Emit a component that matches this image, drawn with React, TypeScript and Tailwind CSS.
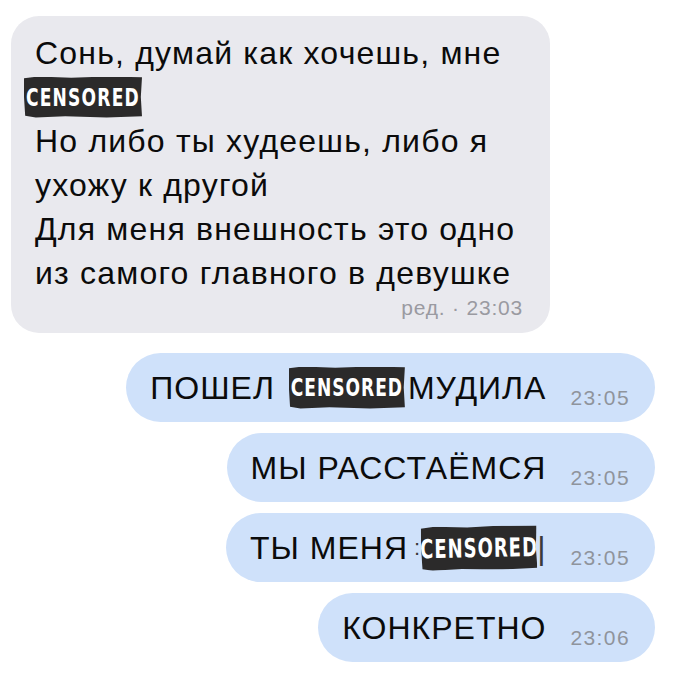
import React from 'react';

// ===== Chat screenshot: one incoming (grey) and four outgoing (blue) bubbles =====

type Outgoing = {
  id: number;
  time: string;
  parts: React.ReactNode;
};

const FONT = "font-['Liberation_Sans','Helvetica','Arial',sans-serif]";

const Censored: React.FC<{ className?: string; text?: string }> = ({ className, text }) => (
  <span
    className={[
      'inline-flex shrink-0 items-center justify-center bg-[#2b2a2a] text-white',
      "font-['DejaVu_Sans_Condensed','Liberation_Sans_Narrow',sans-serif] font-bold",
      '[clip-path:polygon(0_4%,12%_0,40%_3%,70%_0,100%_2%,99%_50%,100%_97%,70%_100%,35%_97%,10%_100%,1%_96%,0_50%)]',
      className ?? '',
    ].join(' ')}
  >
    <span className={['inline-block scale-y-[1.3] leading-none', text ?? 'text-[19px]'].join(' ')}>
      CENSORED
    </span>
  </span>
);

const messages: Outgoing[] = [
  {
    id: 1,
    time: '23:05',
    parts: (
      <>
        ПОШЕЛ
        <Censored className="ml-[14px] mr-[3px] h-[42px] w-[116px]" text="text-[19px]" />
        МУДИЛА
      </>
    ),
  },
  { id: 2, time: '23:05', parts: <>МЫ РАССТАЁМСЯ</> },
  {
    id: 3,
    time: '23:05',
    parts: (
      <>
        ТЫ МЕНЯ
        <span className="ml-[6px] text-[22px] text-[#3a3a3a]">:</span>
        <Censored className="h-[44px] w-[116px] -rotate-1" text="text-[20px]" />
        <span className="text-[#3a3a3a]">|</span>
      </>
    ),
  },
  { id: 4, time: '23:06', parts: <>КОНКРЕТНО</> },
];

const App: React.FC = () => {
  return (
    <div className={`${FONT} min-h-screen w-[673px] bg-white text-[#0b0b0b]`}>
      {/* incoming */}
      <div className="px-[11px] pt-[16px]">
        <div className="w-[539px] rounded-[28px] bg-[#e9e9ee] pb-[12px] pl-[24px] pr-[27px] pt-[15px]">
          <div className="whitespace-nowrap text-[32px] leading-[44px] tracking-[1.2px]">
            <div>Сонь, думай как хочешь, мне</div>
            <div className="flex h-[44px] items-center">
              <Censored className="-ml-[11px] h-[41px] w-[118px]" text="text-[19px]" />
            </div>
            <div>Но либо ты худеешь, либо я</div>
            <div>ухожу к другой</div>
            <div>Для меня внешность это одно</div>
            <div>из самого главного в девушке</div>
          </div>
          <div className="text-right text-[21px] leading-[26px] tracking-[0.8px] text-[#9a9aa1]">
            ред. · 23:03
          </div>
        </div>
      </div>

      {/* outgoing */}
      <div className="mt-[20px] flex flex-col items-end gap-[11px] pr-[18px]">
        {messages.map((m) => (
          <div
            key={m.id}
            className="flex h-[69px] items-center rounded-full bg-[#cfe1fa] pl-[24px] pr-[25px]"
          >
            <div className="flex items-center whitespace-nowrap text-[32px] tracking-[1px]">
              {m.parts}
            </div>
            <div className="ml-[24px] pt-[20px] text-[21px] tracking-[1.4px] text-[#8f949c]">
              {m.time}
            </div>
          </div>
        ))}
      </div>
    </div>
  );
};

export default App;
